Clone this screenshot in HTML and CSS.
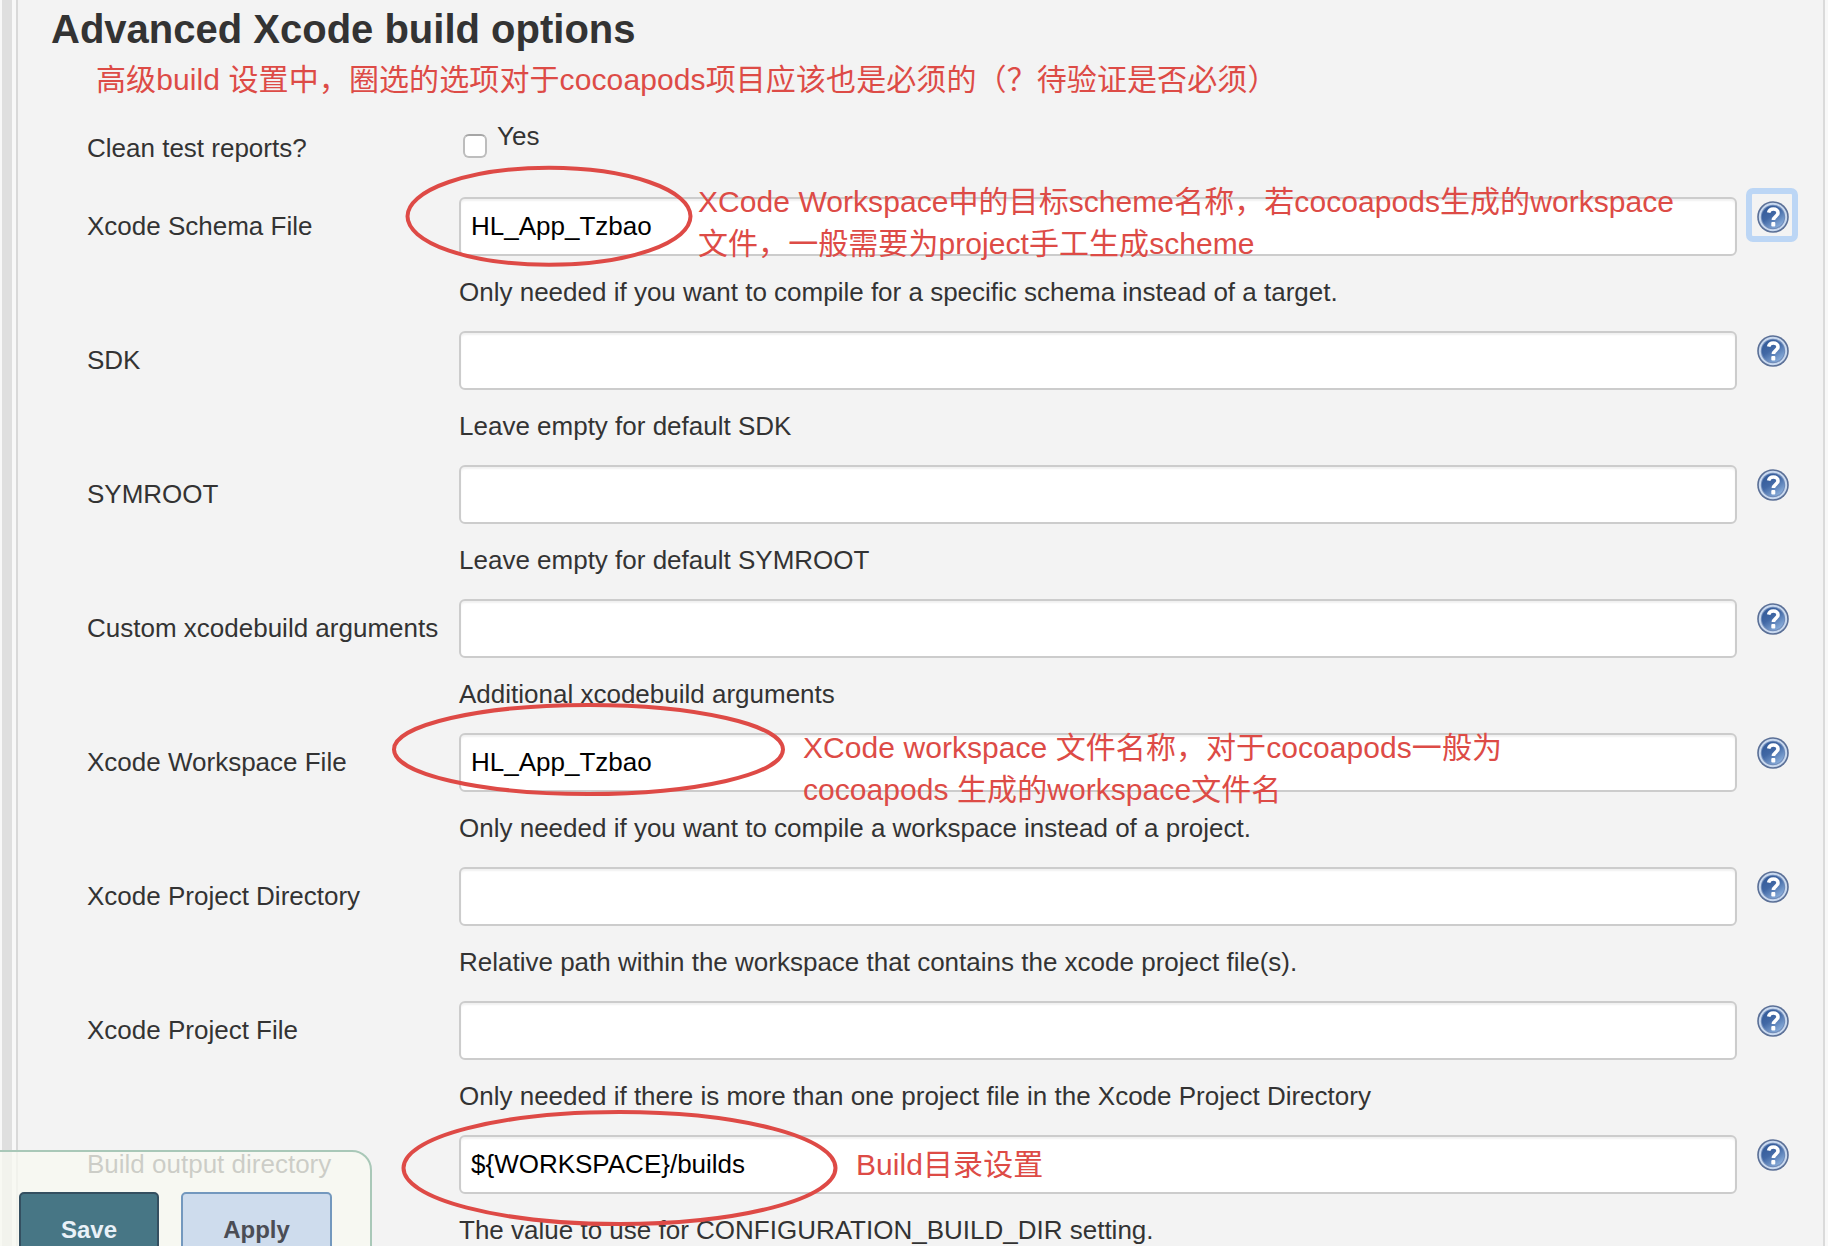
FILE: index.html
```html
<!DOCTYPE html>
<html lang="zh-CN">
<head>
<meta charset="utf-8">
<title>Advanced Xcode build options</title>
<link rel="stylesheet" href="styles.css">
</head>
<body>
<svg width="0" height="0" class="defs">
  <defs>
    <linearGradient id="ball" x1="0" y1="0" x2="0.7" y2="1">
      <stop offset="0" stop-color="#2f5796"/>
      <stop offset="0.5" stop-color="#4168a5"/>
      <stop offset="1" stop-color="#8aaedb"/>
    </linearGradient>
    <symbol id="help" viewBox="0 0 32 32">
      <circle cx="16" cy="16" r="15.800" fill="#5a6f96"/>
      <circle cx="16" cy="16" r="14.200" fill="#c9d9ef"/>
      <circle cx="16" cy="16" r="12.200" fill="#6f8bb9"/>
      <circle cx="16" cy="16" r="11.200" fill="url(#ball)"/>
      <path d="M11.600 11.600C12.200 9.200 14 8 16.300 8c2.800 0 4.700 1.500 4.700 3.900 0 3.200-4.600 3.600-4.600 7.100" fill="none" stroke="#fff" stroke-width="3.600"/>
      <rect x="14.300" y="21" width="4" height="4.400" rx="1" fill="#fff"/>
    </symbol>
  </defs>
</svg>
<div class="page">
  <div class="gutter"></div>
  <main class="section">
    <h1 class="title">Advanced Xcode build options</h1>
    <div class="check-row">
      <span class="label">Clean test reports?</span>
      <span class="box"></span>
      <span class="yes">Yes</span>
    </div>
    <div class="row"><span class="label">Xcode Schema File</span><div class="field">HL_App_Tzbao</div><span class="help focus"><svg><use href="#help"/></svg></span><p class="desc">Only needed if you want to compile for a specific schema instead of a target.</p></div>
    <div class="row"><span class="label">SDK</span><div class="field"></div><span class="help"><svg><use href="#help"/></svg></span><p class="desc">Leave empty for default SDK</p></div>
    <div class="row"><span class="label">SYMROOT</span><div class="field"></div><span class="help"><svg><use href="#help"/></svg></span><p class="desc">Leave empty for default SYMROOT</p></div>
    <div class="row"><span class="label">Custom xcodebuild arguments</span><div class="field"></div><span class="help"><svg><use href="#help"/></svg></span><p class="desc">Additional xcodebuild arguments</p></div>
    <div class="row"><span class="label">Xcode Workspace File</span><div class="field">HL_App_Tzbao</div><span class="help"><svg><use href="#help"/></svg></span><p class="desc">Only needed if you want to compile a workspace instead of a project.</p></div>
    <div class="row"><span class="label">Xcode Project Directory</span><div class="field"></div><span class="help"><svg><use href="#help"/></svg></span><p class="desc">Relative path within the workspace that contains the xcode project file(s).</p></div>
    <div class="row"><span class="label">Xcode Project File</span><div class="field"></div><span class="help"><svg><use href="#help"/></svg></span><p class="desc">Only needed if there is more than one project file in the Xcode Project Directory</p></div>
    <div class="row"><span class="label">Build output directory</span><div class="field">${WORKSPACE}/builds</div><span class="help"><svg><use href="#help"/></svg></span><p class="desc">The value to use for CONFIGURATION_BUILD_DIR setting.</p></div>
  </main>
</div>
<div class="savebar">
  <span class="btn save">Save</span>
  <span class="btn apply">Apply</span>
</div>
<svg class="marks" width="1828" height="1246">
  <ellipse cx="549" cy="216.300" rx="141.500" ry="48.500"/>
  <ellipse cx="588.500" cy="749.500" rx="194.500" ry="44.500"/>
  <ellipse cx="619.500" cy="1168" rx="216" ry="56"/>
  <text class="wide" x="96" y="90">高级build 设置中，圈选的选项对于cocoapods项目应该也是必须的（？待验证是否必须）</text>
  <text x="698" y="212">XCode Workspace中的目标scheme名称，若cocoapods生成的workspace</text>
  <text x="698" y="254">文件，一般需要为project手工生成scheme</text>
  <text x="803" y="758">XCode workspace 文件名称，对于cocoapods一般为</text>
  <text x="803" y="800">cocoapods 生成的workspace文件名</text>
  <text x="856" y="1175">Build目录设置</text>
</svg>
</body>
</html>
```
FILE: styles.css
```css
* { box-sizing: border-box; }
body {
  margin: 0;
  width: 1828px;
  height: 1246px;
  overflow: hidden;
  background: #f8f8f8;
  color: #333;
  font: 26px/30px "Liberation Sans", Arial, sans-serif;
}
.defs { position: absolute; }
.page { display: flex; height: 1246px; overflow: hidden; padding-left: 2px; }
.gutter { width: 10px; margin-right: 4px; background: #dfdfdf; }
.section {
  width: 1809px;
  flex: none;
  background: #f3f3f3;
  border-left: 2px solid #d9d9d9;
  border-right: 2px solid #dadada;
  padding-left: 34px;
}
.title { margin: 0 0 0 -1px; padding-top: 6px; height: 130px; font-size: 40px; line-height: 46px; white-space: nowrap; }
.check-row { display: flex; height: 67px; padding-left: 35px; }
.check-row .label { width: 376px; padding-top: 3px; }
.box {
  width: 24px; height: 24px; margin-top: 4px;
  background: #fff; border: 2px solid #bdbdbd; border-top-color: #a6a6a6; border-radius: 6px;
}
.yes { margin-left: 10px; margin-top: -9px; }
.row {
  display: grid;
  grid-template-columns: 372px 1278px 52px;
  grid-template-rows: 59px 75px;
  column-gap: 0;
  padding-left: 35px;
  height: 134px;
}
.label { white-space: nowrap; }
.row .label { padding-top: 14px; }
.field {
  background: #fff;
  border: 2px solid #ccc;
  border-radius: 6px;
  padding: 12px 10px;
  color: #000;
  box-shadow: inset 0 2px 2px rgba(0, 0, 0, .06);
}
.help { width: 52px; height: 54px; margin: -9px 0 0 9px; padding: 13px 11px 0 11px; }
.help svg { display: block; width: 32px; height: 32px; }
.focus { border: 6px solid #bcd6f5; border-radius: 7px; padding: 7px 5px; }
.desc { grid-column: 2; margin: 0; padding-top: 21px; white-space: nowrap; }
.savebar {
  position: absolute; left: -2px; top: 1150px; width: 374px; height: 120px;
  display: flex; gap: 22px; padding: 40px 0 0 19px;
  border: 2px solid #a9c8b8; border-radius: 0 20px 0 0;
  background: rgba(247, 249, 241, .78);
}
.btn {
  height: 80px; padding-top: 21px; text-align: center;
  font-size: 24px; line-height: 30px; font-weight: bold;
  border: 2px solid; border-radius: 5px;
}
.save { width: 140px; background: #477685; border-color: #344f60; color: #e9f1f8; }
.apply { width: 151px; background: #cedced; border-color: #7398be; color: #4b4d55; }
.marks { position: absolute; left: 0; top: 0; }
.marks ellipse { fill: none; stroke: #de4a46; stroke-width: 4px; }
.marks text { fill: #dd4b46; font: 30px "Liberation Sans", "Noto Sans CJK SC", sans-serif; letter-spacing: .06px; white-space: pre; }
.marks .wide { letter-spacing: .1px; }
```
